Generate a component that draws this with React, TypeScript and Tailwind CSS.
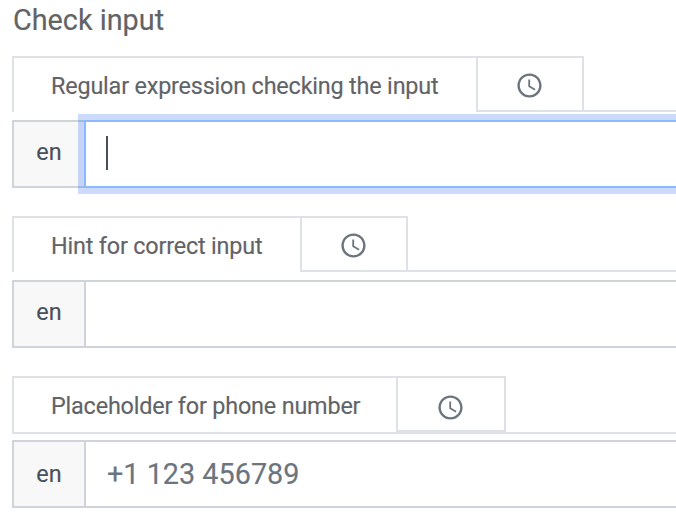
import type { ReactNode } from "react";
import { MdAccessTime } from "react-icons/md";

interface FieldProps {
  label: string;
  labelWidth: string;
  clockWidth: string;
  joined?: boolean;
  focused?: boolean;
  children?: ReactNode;
}

function Field({ label, labelWidth, clockWidth, joined, focused, children }: FieldProps) {
  return (
    <section className="h-[160px] w-full">
      <div className={`flex w-full ${joined ? "h-[58px] border-b-2 border-[#dee2e8]" : "h-14"}`}>
        <div
          className={`${labelWidth} h-14 shrink-0 border-t-2 border-l-2 border-[#dee2e6] pl-[37px] text-[23.4px] leading-[56px] tracking-[-0.185px] whitespace-nowrap text-[#626366]`}
        >
          {label}
        </div>
        <div
          className={`${clockWidth} flex h-14 shrink-0 items-center justify-center border-2 border-[#dee2e6] pr-px text-[#6c757d] ${joined ? "pt-[7px]" : "pt-[3px]"}`}
        >
          <MdAccessTime className="size-[29px]" strokeWidth={0} />
        </div>
        <div className={`h-14 grow ${joined ? "" : "border-b-2 border-[#dee2e6]"}`} />
      </div>
      <div className={`flex h-[68px] ${joined ? "mt-1.5" : "mt-2"}`}>
        <div
          className={`flex w-[74px] shrink-0 justify-center border-2 border-[#ced4da] bg-[#f8f8f8] text-[23.4px] text-[#495057] ${joined ? "leading-[64px]" : "leading-[60px]"}`}
        >
          en
        </div>
        <div
          className={`-ml-0.5 -mr-4 flex grow items-center border-2 bg-white pl-[21px] text-[28.8px] text-[#6c757d] ${joined ? "pt-0.5" : ""} ${focused ? "border-[#8bb9fe] shadow-[0_0_0_6px_rgba(1,71,250,0.2)]" : "border-[#ced4da]"}`}
        >
          {children}
        </div>
      </div>
    </section>
  );
}

export default function App() {
  return (
    <main className="h-[530px] w-full overflow-hidden bg-white pl-3 font-['Roboto',sans-serif] [-webkit-text-stroke:0.15px]">
      <h1 className="h-14 pl-px text-[28.8px] leading-[41px] font-normal text-[#626366]">
        Check input
      </h1>
      <Field
        label="Regular expression checking the input"
        labelWidth="w-[464px]"
        clockWidth="w-[108px]"
        focused
      >
        <span className="-ml-px mb-0.5 h-[34px] w-0.5 bg-[#495057]" />
      </Field>
      <Field label="Hint for correct input" labelWidth="w-[288px]" clockWidth="w-[108px]" />
      <Field label="Placeholder for phone number" labelWidth="w-[384px]" clockWidth="w-[110px]" joined>
        +1 123 456789
      </Field>
    </main>
  );
}
